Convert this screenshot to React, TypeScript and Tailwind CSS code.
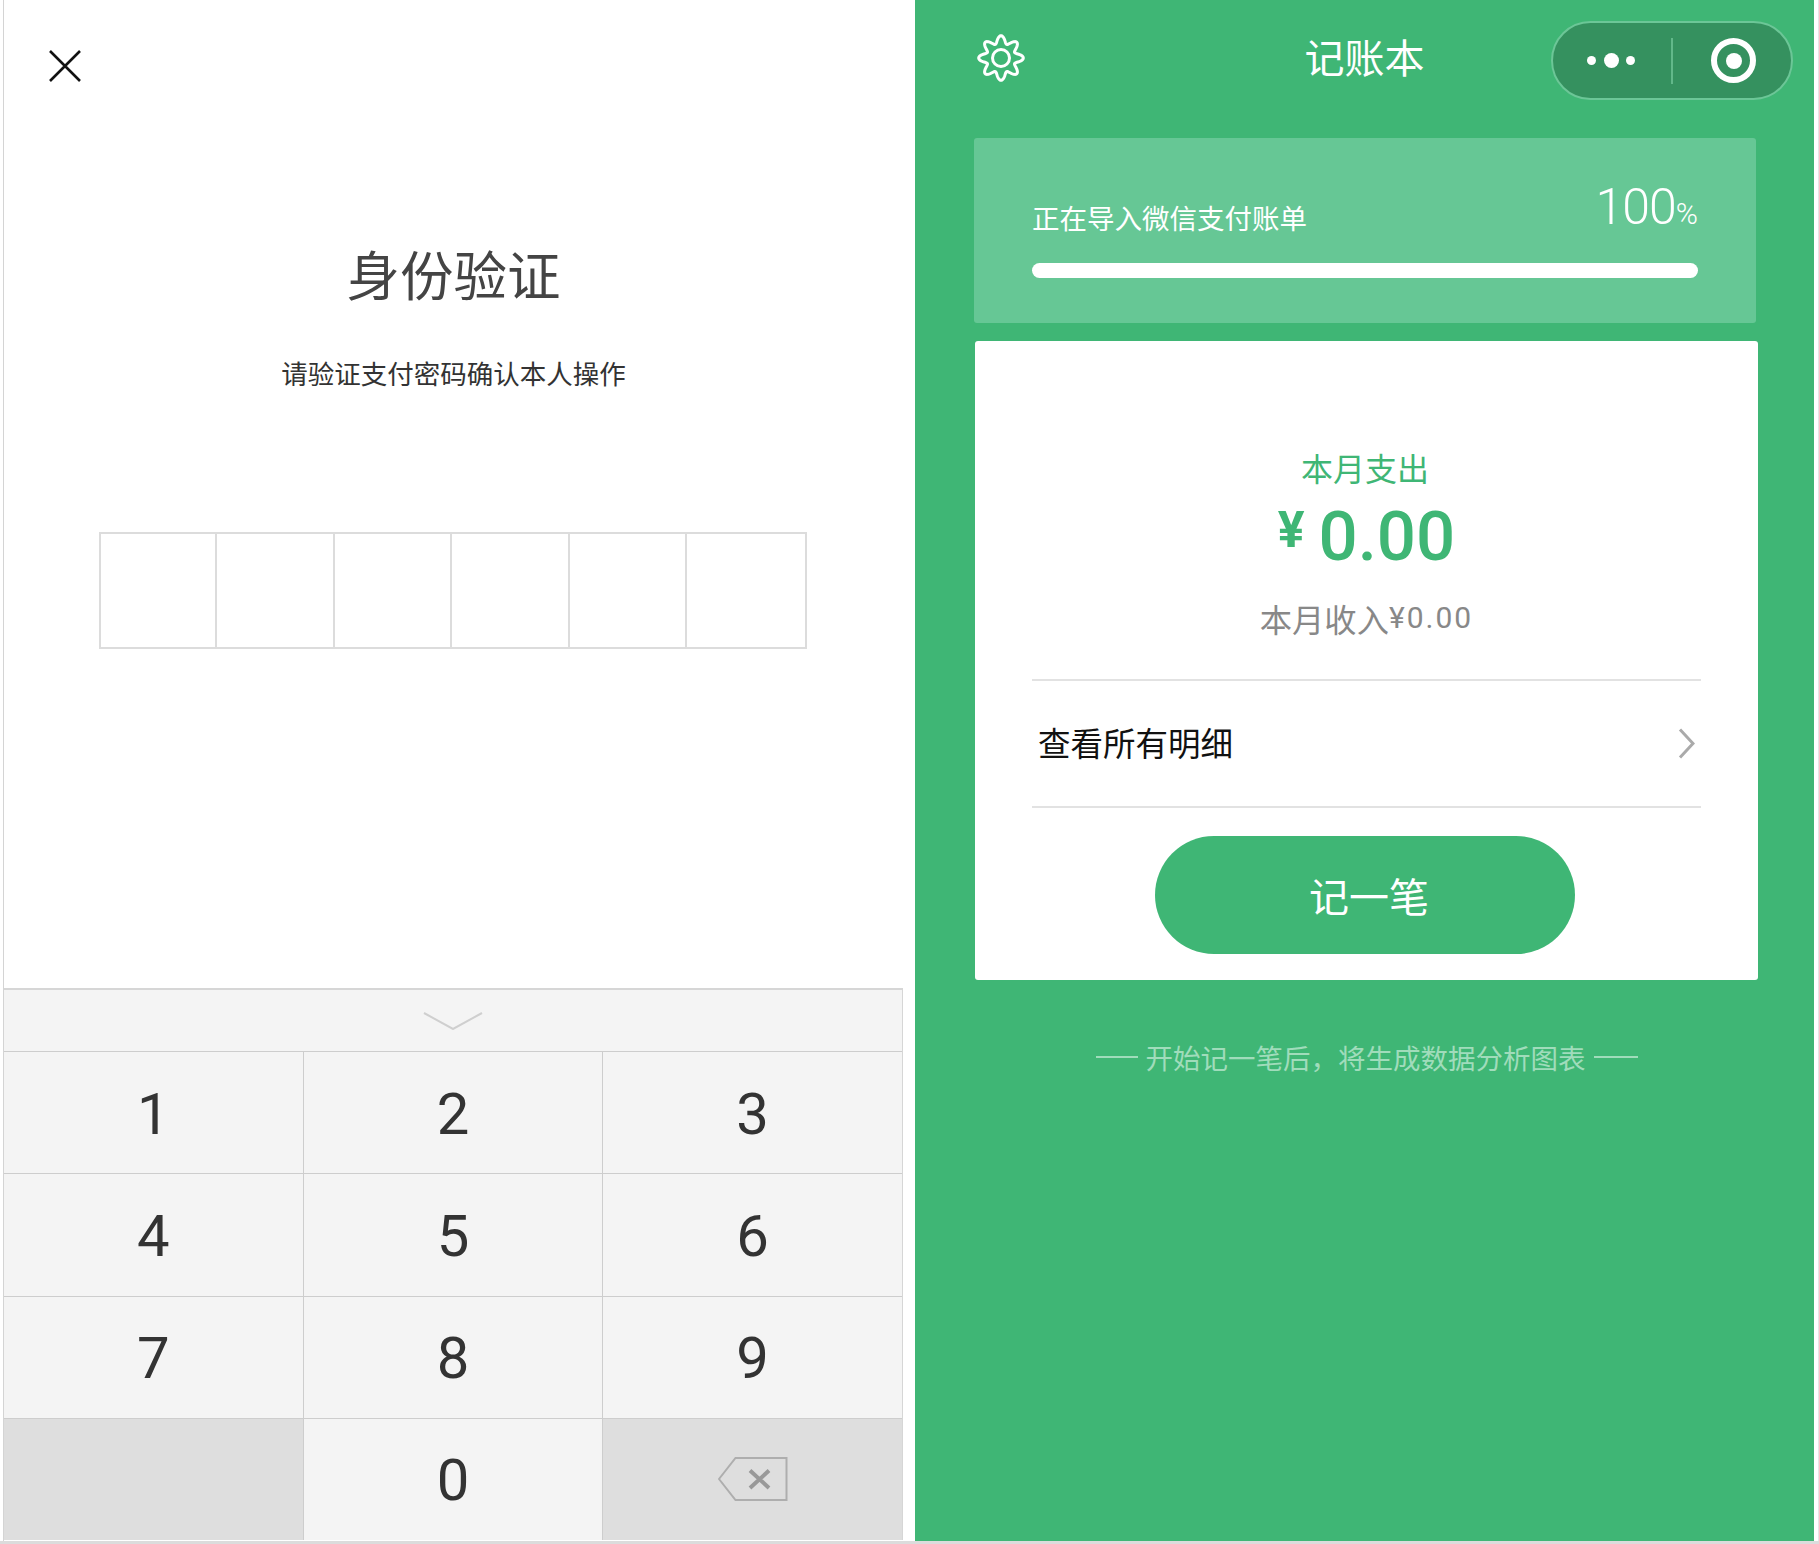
const cjk = "font-['Noto_Sans_CJK_SC','Noto_Sans',sans-serif]";

const gearPath = () => {
  const pts: string[] = [];
  for (let i = 0; i < 240; i++) {
    const a = (i / 240) * Math.PI * 2;
    const r = 18.5 + 3.8 * Math.cos(8 * a);
    pts.push(`${(24 + r * Math.sin(a)).toFixed(2)} ${(24 - r * Math.cos(a)).toFixed(2)}`);
  }
  return `M${pts.join("L")}Z`;
};

const Key = ({ n }: { n: string }) => (
  <div className="flex items-center justify-center bg-[#f4f4f4] pt-[2px] font-['Roboto',sans-serif] text-[58px] font-normal leading-none text-[#333]">
    {n}
  </div>
);

const Keyboard = () => (
  <div className="w-[899px] border-t-2 border-r border-[#d6d6d6] bg-[#f4f4f4]">
    <div className="flex h-[61px] items-start justify-center pt-[22px]">
      <svg width="60" height="18" viewBox="0 0 60 18" fill="none" stroke="#cfcfcf" strokeWidth="2">
        <path d="M1 1L30 17L59 1" />
      </svg>
    </div>
    <div className="grid h-[489px] grid-cols-3 grid-rows-4 gap-px bg-[#cdcdcd] pt-px">
      {["1", "2", "3", "4", "5", "6", "7", "8", "9"].map((n) => (
        <Key key={n} n={n} />
      ))}
      <div className="bg-[#dedede]" />
      <Key n="0" />
      <div className="flex items-center justify-center bg-[#dedede]">
        <svg width="70" height="44" viewBox="0 0 70 44" fill="none">
          <path d="M1 22L17.5 1H68.5V43H17.5Z" stroke="#aeaeae" strokeWidth="2" />
          <path d="M32 13.5L51 31M51 13.5L32 31" stroke="#999" strokeWidth="4" />
        </svg>
      </div>
    </div>
  </div>
);

const LeftPanel = () => (
  <div className={`flex h-full w-[912px] flex-col border-l-[1px] border-[#d4d4d4] bg-white pb-[1px] ${cjk}`}>
    <div className="h-[248px] pl-[44px] pt-[49px]">
      <svg width="34" height="34" viewBox="0 0 34 34" fill="none" stroke="#111" strokeWidth="2.6">
        <path d="M2 2L32 32M32 2L2 32" />
      </svg>
    </div>
    <h1 className="w-[899px] text-center text-[53.5px] font-normal leading-[50px] text-[#444]">身份验证</h1>
    <p className="mt-[60px] w-[899px] text-center text-[26.5px] leading-[30px] text-[#333]">请验证支付密码确认本人操作</p>
    <div className="ml-[95px] mt-[144px] flex h-[117px] w-[708px] border-2 border-[#dcdcdc]">
      {[0, 1, 2, 3, 4].map((i) => (
        <div key={i} className={`h-full border-r-2 border-[#dcdcdc] ${i === 0 ? "w-[116px]" : "w-[117.6px]"}`} />
      ))}
      <div className="flex-1" />
    </div>
    <div className="flex-1" />
    <Keyboard />
  </div>
);

const RightPanel = () => (
  <div className={`flex h-full w-[899px] flex-col bg-[#3fb675] px-[59px] ${cjk}`}>
    <div className="relative flex h-[138px] shrink-0 items-start justify-center">
      <svg className="absolute left-[3px] top-[34px]" width="48" height="48" viewBox="0 0 48 48" fill="none" stroke="#fff" strokeWidth="3">
        <path d={gearPath()} />
        <circle cx="24" cy="24" r="8.5" />
      </svg>
      <div className="mt-[34px] text-[40px] leading-[44px] text-white">记账本</div>
      <div className="absolute left-[577px] top-[21px] flex h-[79px] w-[242px] items-center rounded-full border-2 border-[#6cc697] bg-[#35915f]">
        <div className="flex w-[118px] items-center justify-end gap-[7.5px] pr-[36px]">
          <span className="h-[9px] w-[9px] rounded-full bg-white" />
          <span className="h-[15px] w-[15px] rounded-full bg-white" />
          <span className="h-[9px] w-[9px] rounded-full bg-white" />
        </div>
        <div className="h-[46px] w-[2px] bg-[#62b88a]" />
        <div className="ml-[38px] flex h-[45px] w-[45px] items-center justify-center rounded-full border-[6px] border-white">
          <span className="h-[16px] w-[16px] rounded-full bg-white" />
        </div>
      </div>
    </div>

    <div className="h-[185px] w-[782px] shrink-0 rounded-[3px] bg-[#66c795] px-[58px] pt-[42px]">
      <div className="flex h-[83px] items-end justify-between pb-[22px] text-white">
        <span className="mb-[6px] text-[27.5px] leading-[36px]">正在导入微信支付账单</span>
        <span className="font-['Roboto',sans-serif] text-[50px] font-light leading-[54px] tracking-[-1px]">
          100<span className="text-[30px] tracking-normal">%</span>
        </span>
      </div>
      <div className="h-[15px] rounded-full bg-white" />
    </div>

    <div className="ml-[1px] mt-[18px] h-[639px] w-[783px] shrink-0 rounded-[3px] bg-white px-[57px] pt-[106px]">
      <div className="pr-[3px] text-center text-[32px] leading-[40px] text-[#3fb675]">本月支出</div>
      <div className="mt-[13px] flex h-[72px] items-center justify-center font-['Roboto',sans-serif] font-medium text-[#3fb675]">
        <span className="mb-[12px] mr-[14px] text-[50px] font-bold leading-none">¥</span>
        <span className="text-[69px] leading-none">0.00</span>
      </div>
      <div className="mt-[26px] flex items-center justify-center text-[32.3px] leading-[40px] text-[#888]">
        本月收入<span className="font-['Roboto',sans-serif] text-[30px] tracking-[2px]">¥0.00</span>
      </div>
      <div className="mt-[41px] flex h-[129px] items-center justify-between border-y-2 border-[#e2e2e2] pl-[6px] pr-[6px]">
        <span className="mb-[3px] text-[32.5px] leading-[40px] text-[#111]">查看所有明细</span>
        <svg width="17" height="31" viewBox="0 0 17 31" fill="none" stroke="#aaa" strokeWidth="3">
          <path d="M2 1.5L15 15.5L2 29.5" />
        </svg>
      </div>
      <div className="ml-[123px] mt-[28px] flex h-[118px] w-[420px] items-center justify-center rounded-full bg-[#3fb675] pl-[8px] text-[40px] text-white">
        记一笔
      </div>
    </div>

    <div className="ml-[1px] mt-[62px] flex h-[30px] w-[783px] items-center justify-center gap-[8px] text-[27.5px] leading-[30px] text-[#a0dcbb]">
      <span className="h-[2px] w-[42px] bg-[#a0dcbb]" />
      <span>开始记一笔后，将生成数据分析图表</span>
      <span className="h-[2px] w-[44px] bg-[#a0dcbb]" />
    </div>
  </div>
);

const App = () => (
  <div className="flex h-[1544px] w-[1819px] flex-col bg-white">
    <div className="flex h-[1541px] pl-[3px]">
      <LeftPanel />
      <RightPanel />
      <div className="flex-1 border-r border-[#e6e6e6]" />
    </div>
    <div className="h-[3px] bg-[#dcdcdc]" />
  </div>
);

export default App;
